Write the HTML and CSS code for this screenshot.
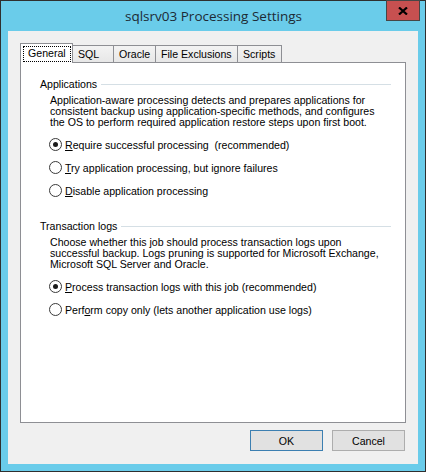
FILE: index.html
```html
<!DOCTYPE html>
<html lang="en">
<head>
<meta charset="utf-8">
<title>sqlsrv03 Processing Settings</title>
<link rel="stylesheet" href="styles.css">
</head>
<body>
<div class="window">
  <div class="titlebar">
    <span class="title">sqlsrv03 Processing Settings</span>
    <button class="close" type="button" aria-label="Close">
      <svg width="10" height="8" viewBox="0 0 10 8"><path d="M1 0.5 L9 7.5 M9 0.5 L1 7.5" stroke="#000" stroke-width="2.2" fill="none"/></svg>
    </button>
  </div>
  <div class="client">
    <div class="tabs">
      <div class="tab tab-general is-active"><span class="focus">General</span></div>
      <div class="tab tab-sql">SQL</div>
      <div class="tab tab-oracle">Oracle</div>
      <div class="tab tab-files">File Exclusions</div>
      <div class="tab tab-scripts">Scripts</div>
    </div>
    <div class="panel">
      <section class="group">
        <div class="group-head"><span>Applications</span><span class="rule"></span></div>
        <p class="desc">Application-aware processing detects and prepares applications for<br>consistent backup using application-specific methods, and configures<br>the OS to perform required application restore steps upon first boot.</p>
        <div class="radios">
          <label class="radio"><span class="dot checked"></span><span><u>R</u>equire successful processing&nbsp; (recommended)</span></label>
          <label class="radio"><span class="dot"></span><span><u>T</u>ry application processing, but ignore failures</span></label>
          <label class="radio"><span class="dot"></span><span><u>D</u>isable application processing</span></label>
        </div>
      </section>
      <section class="group">
        <div class="group-head"><span>Transaction logs</span><span class="rule"></span></div>
        <p class="desc">Choose whether this job should process transaction logs upon<br>successful backup. Logs pruning is supported for Microsoft Exchange,<br>Microsoft SQL Server and Oracle.</p>
        <div class="radios">
          <label class="radio"><span class="dot checked"></span><span><u>P</u>rocess transaction logs with this job (recommended)</span></label>
          <label class="radio"><span class="dot"></span><span>Perf<u>o</u>rm copy only (lets another application use logs)</span></label>
        </div>
      </section>
    </div>
    <div class="buttons">
      <button class="btn btn-default" type="button">OK</button>
      <button class="btn" type="button">Cancel</button>
    </div>
  </div>
</div>
</body>
</html>
```
FILE: styles.css
```css
* { box-sizing: border-box; }
html, body { margin: 0; padding: 0; }
body {
  width: 426px;
  height: 472px;
  font-family: "Liberation Sans", Arial, sans-serif;
  font-size: 10.6px;
  color: #000;
  background: #fff;
}
.window {
  width: 426px;
  height: 472px;
  border: 1px solid #2f2f2f;
  background: #6accea;
  display: flex;
  flex-direction: column;
  position: relative;
}
.titlebar {
  height: 30px;
  flex: none;
  display: flex;
  align-items: center;
  justify-content: center;
}
.title {
  font-family: "Open Sans", "Noto Sans", sans-serif;
  font-size: 13.5px;
  color: #1d2a35;
  padding-left: 1px;
}
.close {
  position: absolute;
  top: -1px;
  right: 5px;
  width: 34px;
  height: 21px;
  padding: 0;
  margin: 0;
  background: #c75050;
  border: 1px solid #464646;
  display: flex;
  align-items: center;
  justify-content: center;
}
.client {
  flex: 1;
  margin: 0 7px 7px;
  background: #f0f0f0;
  display: flex;
  flex-direction: column;
  padding: 12px 12px 13px;
}
.tabs {
  display: flex;
  align-items: flex-end;
  height: 20px;
  margin-bottom: -1px;
  position: relative;
  z-index: 1;
  flex: none;
}
.tab {
  height: 17px;
  margin-bottom: 1px;
  margin-left: -1px;
  border: 1px solid #8e8f94;
  border-bottom: 0;
  background: linear-gradient(#f3f3f3, #e7e7e7);
  line-height: 16px;
  padding-left: 5px;
  white-space: nowrap;
}
.tab:first-child { margin-left: 0; }
.tab.is-active {
  height: 20px;
  margin-bottom: 0;
  background: #fff;
  padding: 2px 1px 1px 2px;
  position: relative;
  z-index: 1;
}
.focus {
  display: block;
  height: 16px;
  border: 1px dotted #000;
  line-height: 13px;
  padding-left: 4px;
}
.tab-general { width: 53px; }
.tab-sql { width: 42px; }
.tab-oracle { width: 43px; }
.tab-files { width: 83px; }
.tab-scripts { width: 45px; }
.panel {
  flex: 1;
  background: #fff;
  border: 1px solid #8e8f94;
  padding: 15px 14px 0 19px;
}
.group + .group { margin-top: 18px; }
.group-head {
  display: flex;
  align-items: center;
  height: 12px;
  line-height: 12px;
  white-space: nowrap;
}
.rule {
  flex: 1;
  height: 1px;
  background: #d5dfe5;
  margin-left: 4px;
}
.desc {
  margin: 5px 0 0 10px;
  line-height: 11px;
  white-space: nowrap;
}
.radios { margin: 5px 0 0 9px; }
.radio {
  display: flex;
  align-items: center;
  height: 23px;
  white-space: nowrap;
}
.dot {
  width: 13px;
  height: 13px;
  border: 1px solid #3a3a3a;
  border-radius: 50%;
  background: #fff;
  margin-right: 3px;
  display: flex;
  align-items: center;
  justify-content: center;
  flex: none;
}
.dot.checked::after {
  content: "";
  width: 5px;
  height: 5px;
  border-radius: 50%;
  background: #1a1a1a;
}
.buttons {
  display: flex;
  justify-content: flex-end;
  gap: 9px;
  margin-top: 7px;
  padding-right: 1px;
  flex: none;
}
.btn {
  width: 73px;
  height: 21px;
  border: 1px solid #adadad;
  background: #e1e1e1;
  font: inherit;
  color: #000;
  padding: 0;
  margin: 0;
}
.btn-default { border-color: #3c7fb1; }
```
